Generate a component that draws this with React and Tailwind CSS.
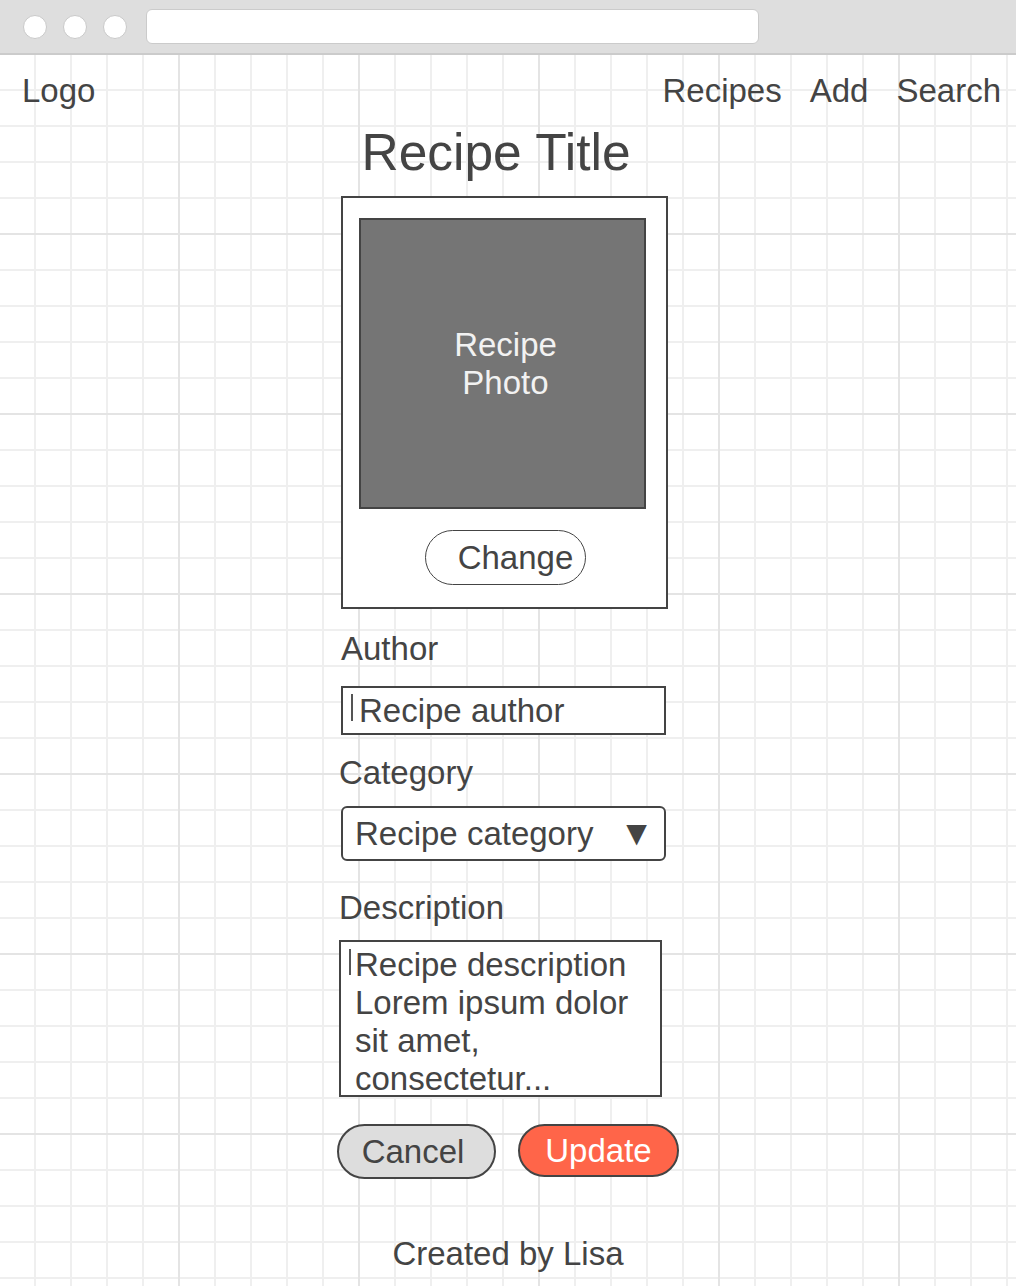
export default function App() {
  return (
    <div className="min-h-[1286px] w-[1016px] bg-white font-['Liberation_Sans',Arial,sans-serif] text-[#444]">
      {/* Browser chrome */}
      <div className="flex h-[55px] items-center border-b-2 border-[#cbcbcb] bg-[#dedede] pl-[23px]">
        <div className="flex gap-4">
          <span className="h-6 w-6 rounded-full border border-[#c9c9c9] bg-white" />
          <span className="h-6 w-6 rounded-full border border-[#c9c9c9] bg-white" />
          <span className="h-6 w-6 rounded-full border border-[#c9c9c9] bg-white" />
        </div>
        <div className="ml-[19px] h-[35px] w-[613px] rounded-md border border-[#cbcbcb] bg-white" />
      </div>

      {/* Grid page */}
      <div className="min-h-[1231px] bg-[linear-gradient(to_right,#e4e4e4_2px,transparent_2px),linear-gradient(to_bottom,#e4e4e4_2px,transparent_2px),linear-gradient(to_right,#efefef_2px,transparent_2px),linear-gradient(to_bottom,#efefef_2px,transparent_2px)] bg-[size:180px_180px,180px_180px,36px_36px,36px_36px] bg-[position:-2px_-2px,-2px_-2px,-2px_-2px,-2px_-2px] pb-10">
        <nav className="flex items-center justify-between pl-[22px] pr-[15px] pt-[18px] text-[33px] leading-[36px]">
          <span>Logo</span>
          <div className="flex gap-[28px]">
            <span>Recipes</span>
            <span>Add</span>
            <span>Search</span>
          </div>
        </nav>

        <div className="ml-[337px] w-[342px]">
          <h1 className="mt-[15px] pr-6 text-center text-[51.5px] leading-[56px]">Recipe Title</h1>

          <div className="ml-1 mt-[16px] flex h-[413px] w-[327px] flex-col border-2 border-[#444] bg-white pl-4 pt-5">
            <div className="flex h-[291px] w-[287px] items-center justify-center border-2 border-[#444] bg-[#757575] pl-[6px] text-center text-[33px] leading-[38px] text-[#f2f2f2]">
              Recipe
              <br />
              Photo
            </div>
            <button className="ml-[66px] mt-[21px] h-[55px] w-[161px] rounded-full border-[1.5px] border-[#444] bg-white pl-[20px] text-[33px] leading-none text-[#444]">
              Change
            </button>
          </div>

          <div className="ml-1 mt-[22px] text-[33px] leading-[36px]">Author</div>
          <div className="ml-1 mt-[19px] flex h-[49px] w-[325px] items-center border-2 border-[#444] bg-white pl-2 text-[33px]">
            <span className="mb-[6px] mr-[6px] h-[27px] w-[2px] bg-[#555]" />
            <span>Recipe author</span>
          </div>

          <div className="ml-[2px] mt-[20px] text-[33px] leading-[36px]">Category</div>
          <div className="ml-1 mt-[15px] flex h-[55px] w-[325px] items-center justify-between rounded-md border-2 border-[#444] bg-white pl-[12px] pr-[10px] text-[33px]">
            <span>Recipe category</span>
            <span className="text-[35px]">▼</span>
          </div>

          <div className="ml-[2px] mt-[29px] text-[33px] leading-[36px]">Description</div>
          <div className="ml-[2px] mt-[14px] flex h-[157px] w-[323px] border-2 border-[#444] bg-white pl-2 pt-[4px] text-[33px] leading-[38px]">
            <span className="mr-[4px] mt-[3px] h-[26px] w-[2px] shrink-0 bg-[#555]" />
            <span>
              Recipe description
              <br />
              Lorem ipsum dolor
              <br />
              sit amet,
              <br />
              consectetur...
            </span>
          </div>

          <div className="mt-[27px] flex gap-[22px]">
            <button className="h-[55px] w-[159px] rounded-full border-2 border-[#444] bg-[#dddddd] pr-[7px] text-[33px] leading-none text-[#444]">
              Cancel
            </button>
            <button className="h-[53px] w-[161px] rounded-full border-2 border-[#444] bg-[#ff6549] text-[33px] leading-none text-white">
              Update
            </button>
          </div>
        </div>

        <footer className="mt-[57px] text-center text-[33px] leading-[36px]">Created by Lisa</footer>
      </div>
    </div>
  );
}
